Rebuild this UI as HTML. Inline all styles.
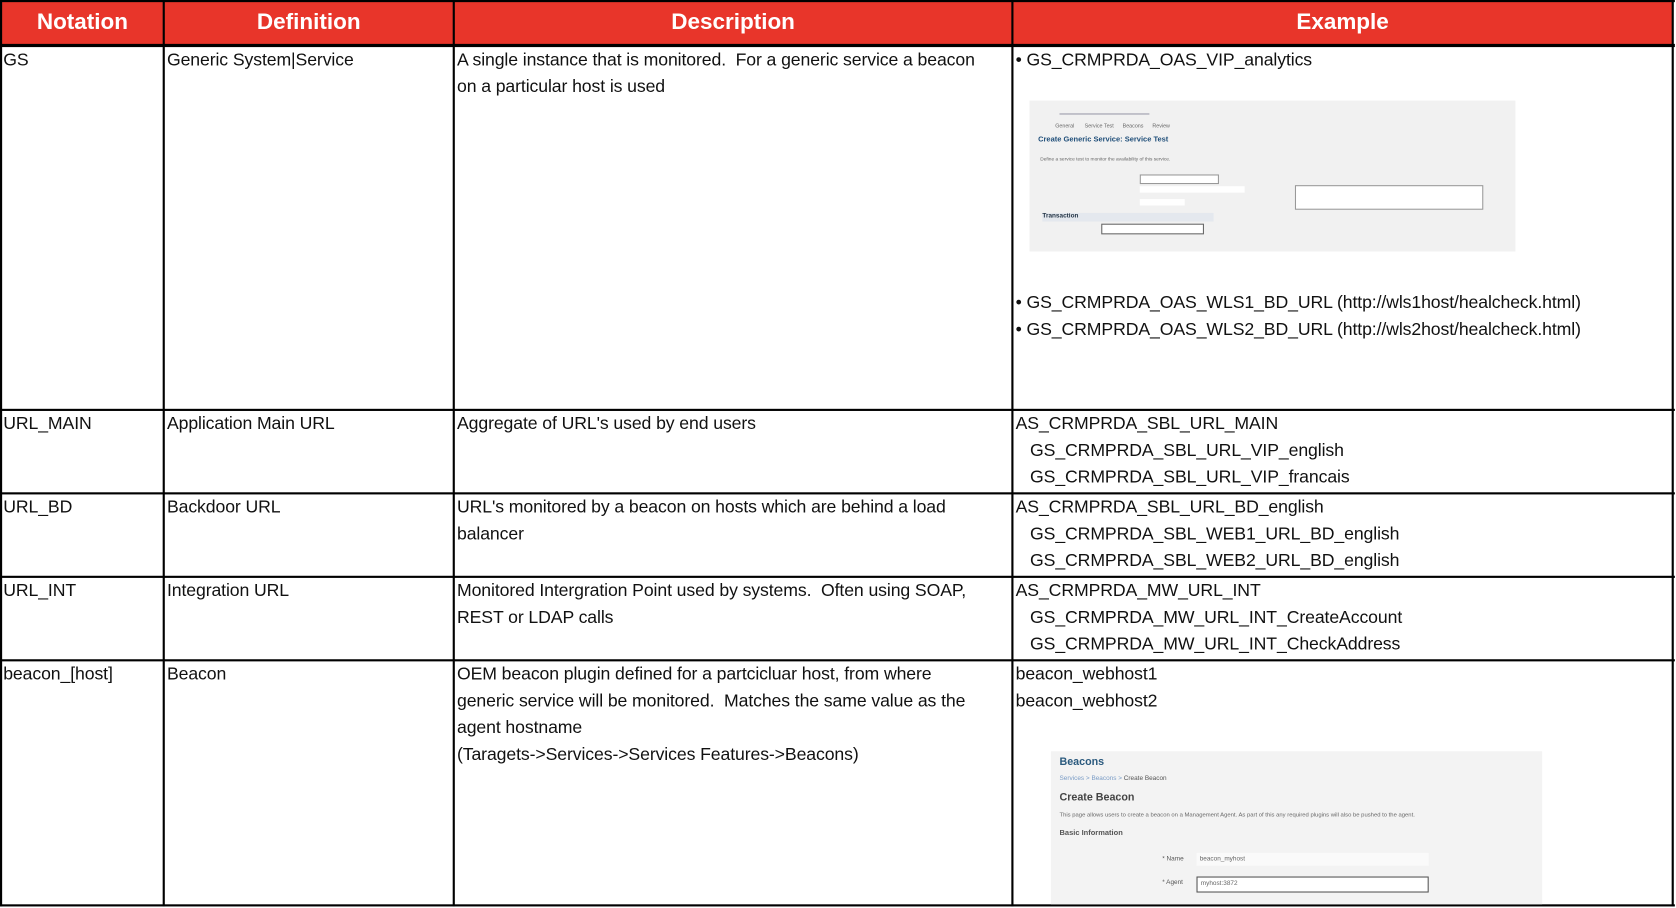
<!DOCTYPE html>
<html><head><meta charset="utf-8"><style>
body{margin:0;width:1676px;height:906px;background:#fff;overflow:hidden}
#w{position:absolute;left:0;top:0;width:1566px;height:848px;transform:scale(1.0702);transform-origin:0 0;font-family:"Liberation Sans",sans-serif}
.h{position:absolute;top:0;height:42px;background:#e8352a;color:#fff;font-weight:bold;font-size:21px;line-height:42px;text-align:center}
.l{position:absolute;background:#000}
.t{position:absolute;font-size:16.5px;line-height:25px;color:#111;white-space:nowrap;letter-spacing:-0.1px}
.s{position:absolute;background:#f3f3f3;font-size:6px;color:#666;overflow:hidden}
</style></head><body><div id="w">
<div class="h" style="left:1px;width:152px">Notation</div>
<div class="h" style="left:153px;width:271px">Definition</div>
<div class="h" style="left:424px;width:522px">Description</div>
<div class="h" style="left:946px;width:617px">Example</div>
<div class="l" style="left:0;top:0;width:1565px;height:2px"></div>
<div class="l" style="left:0;top:41px;width:1565px;height:3px"></div>
<div class="l" style="left:0;top:382px;width:1565px;height:2px"></div>
<div class="l" style="left:0;top:460px;width:1565px;height:2px"></div>
<div class="l" style="left:0;top:538px;width:1565px;height:2px"></div>
<div class="l" style="left:0;top:616px;width:1565px;height:2px"></div>
<div class="l" style="left:0;top:845px;width:1565px;height:2px"></div>
<div class="l" style="left:0;top:0;width:2px;height:847px"></div>
<div class="l" style="left:152px;top:0;width:2px;height:847px"></div>
<div class="l" style="left:423px;top:0;width:2px;height:847px"></div>
<div class="l" style="left:945px;top:0;width:2px;height:847px"></div>
<div class="l" style="left:1562px;top:0;width:2px;height:847px"></div>

<div class="t" style="left:3px;top:44px">GS</div>
<div class="t" style="left:156px;top:44px">Generic System|Service</div>
<div class="t" style="left:427px;top:44px">A single instance that is monitored.&nbsp; For a generic service a beacon<br>on a particular host is used</div>
<div class="t" style="left:949px;top:44px">• GS_CRMPRDA_OAS_VIP_analytics</div>
<div class="s" style="left:962px;top:94px;width:454px;height:141px;background:#f1f1f1">
 <div style="position:absolute;left:28px;top:12px;width:84px;height:1px;background:#99a"></div>
 <div style="position:absolute;left:24px;top:21px;font-size:5px">General &nbsp;&nbsp;&nbsp;&nbsp;&nbsp; Service Test &nbsp;&nbsp;&nbsp;&nbsp; Beacons &nbsp;&nbsp;&nbsp;&nbsp; Review</div>
 <div style="position:absolute;left:8px;top:33px;font-size:7px;color:#1f4e79;font-weight:bold">Create Generic Service: Service Test</div>
 <div style="position:absolute;left:10px;top:52px;font-size:4.5px">Define a service test to monitor the availability of this service.</div>
 <div style="position:absolute;left:103px;top:69px;width:72px;height:7px;background:#fff;border:1px solid #999"></div>
 <div style="position:absolute;left:103px;top:80px;width:98px;height:6px;background:#fff"></div>
 <div style="position:absolute;left:248px;top:79px;width:174px;height:21px;background:#fff;border:1px solid #999"></div>
 <div style="position:absolute;left:103px;top:92px;width:42px;height:6px;background:#fff"></div>
 <div style="position:absolute;left:12px;top:105px;width:160px;height:8px;background:#e4e8ee;font-size:6px;font-weight:bold;color:#234">Transaction</div>
 <div style="position:absolute;left:67px;top:115px;width:94px;height:8px;background:#fff;border:1px solid #666"></div>
</div>
<div class="t" style="left:949px;top:271px">• GS_CRMPRDA_OAS_WLS1_BD_URL (http://wls1host/healcheck.html)<br>• GS_CRMPRDA_OAS_WLS2_BD_URL (http://wls2host/healcheck.html)</div>

<div class="t" style="left:3px;top:384px">URL_MAIN</div>
<div class="t" style="left:156px;top:384px">Application Main URL</div>
<div class="t" style="left:427px;top:384px">Aggregate of URL's used by end users</div>
<div class="t" style="left:949px;top:384px">AS_CRMPRDA_SBL_URL_MAIN<br>&nbsp;&nbsp; GS_CRMPRDA_SBL_URL_VIP_english<br>&nbsp;&nbsp; GS_CRMPRDA_SBL_URL_VIP_francais</div>

<div class="t" style="left:3px;top:462px">URL_BD</div>
<div class="t" style="left:156px;top:462px">Backdoor URL</div>
<div class="t" style="left:427px;top:462px">URL's monitored by a beacon on hosts which are behind a load<br>balancer</div>
<div class="t" style="left:949px;top:462px">AS_CRMPRDA_SBL_URL_BD_english<br>&nbsp;&nbsp; GS_CRMPRDA_SBL_WEB1_URL_BD_english<br>&nbsp;&nbsp; GS_CRMPRDA_SBL_WEB2_URL_BD_english</div>

<div class="t" style="left:3px;top:540px">URL_INT</div>
<div class="t" style="left:156px;top:540px">Integration URL</div>
<div class="t" style="left:427px;top:540px">Monitored Intergration Point used by systems.&nbsp; Often using SOAP,<br>REST or LDAP calls</div>
<div class="t" style="left:949px;top:540px">AS_CRMPRDA_MW_URL_INT<br>&nbsp;&nbsp; GS_CRMPRDA_MW_URL_INT_CreateAccount<br>&nbsp;&nbsp; GS_CRMPRDA_MW_URL_INT_CheckAddress</div>

<div class="t" style="left:3px;top:618px">beacon_[host]</div>
<div class="t" style="left:156px;top:618px">Beacon</div>
<div class="t" style="left:427px;top:618px">OEM beacon plugin defined for a partcicluar host, from where<br>generic service will be monitored.&nbsp; Matches the same value as the<br>agent hostname<br>(Taragets-&gt;Services-&gt;Services Features-&gt;Beacons)</div>
<div class="t" style="left:949px;top:618px">beacon_webhost1<br>beacon_webhost2</div>
<div class="s" style="left:982px;top:702px;width:459px;height:143px">
 <div style="position:absolute;left:8px;top:5px;font-size:10px;font-weight:bold;color:#2b5a7e">Beacons</div>
 <div style="position:absolute;left:8px;top:23px;font-size:6px;color:#7a9cc6">Services &gt; Beacons &gt; <span style="color:#555">Create Beacon</span></div>
 <div style="position:absolute;left:8px;top:38px;font-size:10px;font-weight:bold;color:#444">Create Beacon</div>
 <div style="position:absolute;left:8px;top:57px;font-size:5.5px;color:#666;white-space:nowrap">This page allows users to create a beacon on a Management Agent. As part of this any required plugins will also be pushed to the agent.</div>
 <div style="position:absolute;left:8px;top:73px;font-size:7px;font-weight:bold;color:#555">Basic Information</div>
 <div style="position:absolute;left:104px;top:98px;font-size:6px;color:#555">* Name</div>
 <div style="position:absolute;left:136px;top:95px;width:214px;height:12px;background:#fafafa;font-size:6px;line-height:12px;padding-left:3px">beacon_myhost</div>
 <div style="position:absolute;left:104px;top:120px;font-size:6px;color:#555">* Agent</div>
 <div style="position:absolute;left:136px;top:117px;width:212px;height:13px;background:#fff;border:1px solid #555;font-size:6px;line-height:13px;padding-left:3px">myhost:3872</div>
</div>
</div></body></html>
